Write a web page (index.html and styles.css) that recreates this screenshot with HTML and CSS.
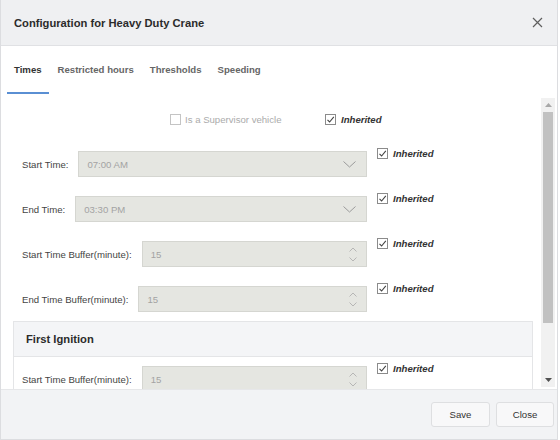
FILE: index.html
```html
<!DOCTYPE html>
<html>
<head>
<meta charset="utf-8">
<link rel="stylesheet" href="styles.css">
</head>
<body>
<div class="dialog">
  <div class="header">
    <span class="title">Configuration for Heavy Duty Crane</span>
    <svg class="close-x" width="11" height="11" viewBox="0 0 11 11"><path d="M1 1L10 10M10 1L1 10" stroke="#5f5f5f" stroke-width="1.2" fill="none"/></svg>
  </div>
  <div class="tabs">
    <div class="tab active">Times</div>
    <div class="tab">Restricted hours</div>
    <div class="tab">Thresholds</div>
    <div class="tab">Speeding</div>
  </div>
  <div class="body">
    <div class="content">
      <div class="super-row">
        <div class="super-group">
          <span class="cb cb-disabled"></span>
          <span class="super-label">Is a Supervisor vehicle</span>
        </div>
        <div class="inh inh-inline">
          <span class="cb cb-checked"><svg width="9" height="9" viewBox="0 0 9 9"><path d="M1.5 4.8L3.6 7L7.8 1.8" stroke="#444" stroke-width="1.1" fill="none"/></svg></span>
          <span class="inh-label">Inherited</span>
        </div>
      </div>

      <div class="row">
        <div class="field">
          <span class="label">Start Time:</span>
          <div class="input select"><span class="val">07:00 AM</span>
            <svg class="chev" width="13" height="7" viewBox="0 0 13 7"><path d="M0.5 0.5L6.5 6L12.5 0.5" stroke="#9a9a9a" stroke-width="1" fill="none"/></svg>
          </div>
        </div>
        <div class="inh">
          <span class="cb cb-checked"><svg width="9" height="9" viewBox="0 0 9 9"><path d="M1.5 4.8L3.6 7L7.8 1.8" stroke="#444" stroke-width="1.1" fill="none"/></svg></span>
          <span class="inh-label">Inherited</span>
        </div>
      </div>

      <div class="row">
        <div class="field">
          <span class="label">End Time:</span>
          <div class="input select"><span class="val">03:30 PM</span>
            <svg class="chev" width="13" height="7" viewBox="0 0 13 7"><path d="M0.5 0.5L6.5 6L12.5 0.5" stroke="#9a9a9a" stroke-width="1" fill="none"/></svg>
          </div>
        </div>
        <div class="inh">
          <span class="cb cb-checked"><svg width="9" height="9" viewBox="0 0 9 9"><path d="M1.5 4.8L3.6 7L7.8 1.8" stroke="#444" stroke-width="1.1" fill="none"/></svg></span>
          <span class="inh-label">Inherited</span>
        </div>
      </div>

      <div class="row">
        <div class="field">
          <span class="label">Start Time Buffer(minute):</span>
          <div class="input num"><span class="val">15</span>
            <span class="spin">
              <svg width="8" height="5" viewBox="0 0 8 5"><path d="M0.5 4.5L4 1L7.5 4.5" stroke="#b0b0b0" stroke-width="0.9" fill="none"/></svg>
              <svg width="8" height="5" viewBox="0 0 8 5"><path d="M0.5 0.5L4 4L7.5 0.5" stroke="#b0b0b0" stroke-width="0.9" fill="none"/></svg>
            </span>
          </div>
        </div>
        <div class="inh">
          <span class="cb cb-checked"><svg width="9" height="9" viewBox="0 0 9 9"><path d="M1.5 4.8L3.6 7L7.8 1.8" stroke="#444" stroke-width="1.1" fill="none"/></svg></span>
          <span class="inh-label">Inherited</span>
        </div>
      </div>

      <div class="row">
        <div class="field">
          <span class="label">End Time Buffer(minute):</span>
          <div class="input num"><span class="val">15</span>
            <span class="spin">
              <svg width="8" height="5" viewBox="0 0 8 5"><path d="M0.5 4.5L4 1L7.5 4.5" stroke="#b0b0b0" stroke-width="0.9" fill="none"/></svg>
              <svg width="8" height="5" viewBox="0 0 8 5"><path d="M0.5 0.5L4 4L7.5 0.5" stroke="#b0b0b0" stroke-width="0.9" fill="none"/></svg>
            </span>
          </div>
        </div>
        <div class="inh">
          <span class="cb cb-checked"><svg width="9" height="9" viewBox="0 0 9 9"><path d="M1.5 4.8L3.6 7L7.8 1.8" stroke="#444" stroke-width="1.1" fill="none"/></svg></span>
          <span class="inh-label">Inherited</span>
        </div>
      </div>

      <div class="panel">
        <div class="panel-head">First Ignition</div>
        <div class="panel-body">
          <div class="row row-panel">
            <div class="field field-panel">
              <span class="label">Start Time Buffer(minute):</span>
              <div class="input num"><span class="val">15</span>
                <span class="spin">
                  <svg width="8" height="5" viewBox="0 0 8 5"><path d="M0.5 4.5L4 1L7.5 4.5" stroke="#b0b0b0" stroke-width="0.9" fill="none"/></svg>
                  <svg width="8" height="5" viewBox="0 0 8 5"><path d="M0.5 0.5L4 4L7.5 0.5" stroke="#b0b0b0" stroke-width="0.9" fill="none"/></svg>
                </span>
              </div>
            </div>
            <div class="inh">
              <span class="cb cb-checked"><svg width="9" height="9" viewBox="0 0 9 9"><path d="M1.5 4.8L3.6 7L7.8 1.8" stroke="#444" stroke-width="1.1" fill="none"/></svg></span>
              <span class="inh-label">Inherited</span>
            </div>
          </div>
        </div>
      </div>
    </div>
    <div class="scrollbar">
      <div class="sb-btn"><svg width="7" height="4" viewBox="0 0 7 4"><path d="M0 4L3.5 0L7 4Z" fill="#a8a8a8"/></svg></div>
      <div class="sb-thumb"></div>
      <div class="sb-rest"></div>
      <div class="sb-btn"><svg width="7" height="4" viewBox="0 0 7 4"><path d="M0 0L3.5 4L7 0Z" fill="#505050"/></svg></div>
    </div>
  </div>
  <div class="footer">
    <button class="btn">Save</button>
    <button class="btn">Close</button>
  </div>
</div>
</body>
</html>
```

FILE: styles.css
```css
html, body {
  margin: 0;
  padding: 0;
  background: #ffffff;
}
body {
  width: 560px;
  height: 440px;
  overflow: hidden;
  font-family: "Liberation Sans", Arial, sans-serif;
}
.dialog {
  width: 558px;
  height: 440px;
  box-sizing: border-box;
  border: 1px solid #dcdde0;
  border-top: none;
  display: flex;
  flex-direction: column;
  background: #fff;
}
.header {
  height: 45px;
  flex: none;
  background: #eff0f2;
  border-bottom: 1px solid #e0e1e4;
  display: flex;
  align-items: center;
  justify-content: space-between;
  padding: 0 14px 0 13px;
}
.title {
  font-size: 11.2px;
  font-weight: bold;
  color: #2b2b2b;
}
.close-x {
  display: block;
}
.tabs {
  flex: none;
  display: flex;
  padding-left: 6px;
  margin-bottom: 3px;
  gap: 2px;
}
.tab {
  height: 44px;
  line-height: 44px;
  padding: 2px 7px 0 7px;
  font-size: 9.6px;
  font-weight: bold;
  color: #666;
  border-bottom: 2px solid transparent;
}
.tab.active {
  color: #333;
  border-bottom-color: #5a8fd3;
}
.body {
  flex: 1;
  min-height: 0;
  display: flex;
}
.content {
  width: 540px;
  flex: none;
  overflow: hidden;
  box-sizing: border-box;
  padding: 0 8px 0 12px;
}
.super-row {
  display: flex;
  align-items: center;
  height: 14px;
  margin-top: 15px;
  padding-left: 157px;
}
.super-group {
  display: flex;
  align-items: center;
  width: 155px;
}
.super-label {
  font-size: 9.6px;
  color: #ababab;
  margin-left: 4px;
}
.cb {
  width: 11px;
  height: 11px;
  box-sizing: border-box;
  border: 1px solid #8b8b8b;
  background: #fff;
  display: inline-flex;
  align-items: center;
  justify-content: center;
  flex: none;
}
.cb-disabled {
  border-color: #c4c4c4;
}
.cb svg {
  display: block;
}
.inh {
  display: flex;
  align-items: center;
  margin-left: 10px;
  margin-top: -3px;
}
.inh-inline {
  margin: 0;
}
.inh-label {
  margin-left: 5px;
  font-size: 9.6px;
  font-weight: bold;
  font-style: italic;
  color: #333;
}
.row {
  display: flex;
  align-items: flex-start;
  margin-top: 19px;
  padding-left: 9px;
}
.super-row + .row {
  margin-top: 25px;
}
.field {
  width: 345px;
  display: flex;
  align-items: center;
  flex: none;
}
.label {
  font-size: 9.6px;
  color: #444;
  margin-right: 10px;
  white-space: nowrap;
}
.input {
  flex: 1;
  height: 26px;
  box-sizing: border-box;
  background: #e5e6e1;
  border: 1px solid #d5d6d1;
  display: flex;
  align-items: center;
  justify-content: space-between;
  padding: 0 9px 0 8px;
}
.val {
  font-size: 9.6px;
  color: #a3a3a3;
}
.chev {
  display: block;
  margin-right: 1px;
}
.spin {
  display: flex;
  flex-direction: column;
  gap: 5px;
}
.spin svg {
  display: block;
}
.panel {
  margin-top: 9px;
  border: 1px solid #e4e5e7;
}
.panel-head {
  height: 34px;
  line-height: 34px;
  background: #f4f5f7;
  border-bottom: 1px solid #e4e5e7;
  padding-left: 12px;
  font-size: 11.2px;
  font-weight: bold;
  color: #2b2b2b;
}
.panel-body {
  padding: 9px 0 20px 0;
}
.row-panel {
  margin-top: 0;
  padding-left: 8px;
}
.field-panel {
  width: 345px;
}
.scrollbar {
  width: 14px;
  flex: none;
  margin: 1px 0 2px 0;
  background: #f1f1f1;
  display: flex;
  flex-direction: column;
  align-items: center;
}
.sb-btn {
  height: 14px;
  width: 14px;
  display: flex;
  align-items: center;
  justify-content: center;
  flex: none;
}
.sb-thumb {
  width: 10px;
  height: 211px;
  background: #c1c1c1;
  flex: none;
}
.sb-rest {
  flex: 1;
}
.footer {
  flex: none;
  height: 49px;
  border-top: 1px solid #e6e7e9;
  background: #f2f3f5;
  display: flex;
  justify-content: flex-end;
  align-items: center;
  gap: 6px;
  padding-right: 3px;
}
.btn {
  height: 25px;
  box-sizing: border-box;
  background: #f8f8f9;
  border: 1px solid #dedfe1;
  border-radius: 3px;
  font-family: "Liberation Sans", Arial, sans-serif;
  font-size: 9.6px;
  color: #333;
  padding: 0;
}
.btn:first-child {
  width: 59px;
}
.btn:last-child {
  width: 58px;
}
```
